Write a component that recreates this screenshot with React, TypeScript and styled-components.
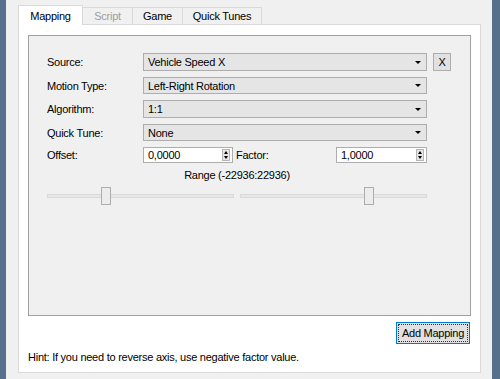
import React from 'react';
import styled, { createGlobalStyle } from 'styled-components';

const GlobalStyle = createGlobalStyle`
  html, body { margin: 0; padding: 0; background: #f0f0f0; }
  body {
    font-family: "Liberation Sans", Arial, sans-serif;
    font-size: 11px;
    letter-spacing: -0.25px;
    color: #000;
  }
  * { box-sizing: border-box; }
`;

const Window = styled.div`
  width: 500px;
  height: 379px;
  display: flex;
  background: #f0f0f0;
  overflow: hidden;
`;

const Edge = styled.div<{ $w: number }>`
  flex: none;
  width: ${p => p.$w}px;
  background: #56708c;
`;

const Main = styled.div`
  flex: 1;
  min-width: 0;
  display: flex;
  flex-direction: column;
  padding: 5px 11px 6px 12px;
`;

const TabBar = styled.div`
  height: 19px;
  display: flex;
  align-items: flex-end;
  position: relative;
  z-index: 1;
`;

const Tab = styled.div<{ $w: number; $active?: boolean; $disabled?: boolean }>`
  width: ${p => p.$w}px;
  height: ${p => (p.$active ? 20 : 17)}px;
  margin-bottom: ${p => (p.$active ? -1 : 0)}px;
  margin-left: -1px;
  &:first-child { margin-left: 0; }
  display: flex;
  align-items: center;
  justify-content: center;
  padding-top: ${p => (p.$active ? 1 : 0)}px;
  background: ${p => (p.$active ? '#fff' : '#f0f0f0')};
  border: 1px solid #d9d9d9;
  border-bottom: none;
  color: ${p => (p.$disabled ? '#9d9d9d' : '#000')};
  position: relative;
  z-index: ${p => (p.$active ? 2 : 1)};
`;

const Pane = styled.div`
  flex: 1;
  display: flex;
  flex-direction: column;
  background: #fff;
  border: 1px solid #d9d9d9;
  padding: 10px 9px 8px 9px;
`;

const Group = styled.div`
  flex: 1;
  background: #f0f0f0;
  border: 1px solid #a0a0a0;
  padding: 17px 18px 0 18px;
`;

const Form = styled.div`
  display: grid;
  grid-template-columns: 90px 284px 18px;
  grid-template-rows: 18px 17px 18px 17px 16px;
  column-gap: 6px;
  row-gap: 6px;
  align-items: stretch;
`;

const Label = styled.div`
  display: flex;
  align-items: center;
`;

const Combo = styled.div`
  grid-column: 2;
  display: flex;
  align-items: center;
  justify-content: space-between;
  padding: 0 5px 0 4px;
  background: #e5e5e5;
  border: 1px solid #adadad;
`;

const Arrow = styled.span`
  width: 0;
  height: 0;
  border-left: 3px solid transparent;
  border-right: 3px solid transparent;
  border-top: 3px solid #000;
`;

const SmallButton = styled.div`
  grid-column: 3;
  display: flex;
  align-items: center;
  justify-content: center;
  background: #e1e1e1;
  border: 1px solid #adadad;
  font-size: 11px;
`;

const OffsetRow = styled.div`
  grid-column: 2;
  display: grid;
  grid-template-columns: 90px 1fr 91px;
  column-gap: 3px;
`;

const Spin = styled.div`
  display: flex;
  align-items: center;
  justify-content: space-between;
  padding: 0 2px 0 4px;
  background: #fff;
  border: 1px solid #adadad;
`;

const SpinArrows = styled.div`
  width: 8px;
  height: 12px;
  display: flex;
  flex-direction: column;
  align-items: center;
  justify-content: space-evenly;
  background: #e6e6e6;
  border: 1px solid #b5b5b5;
`;

const Tri = styled.span<{ $up?: boolean }>`
  width: 0;
  height: 0;
  border-left: 2.5px solid transparent;
  border-right: 2.5px solid transparent;
  ${p => (p.$up ? 'border-bottom: 3px solid #000;' : 'border-top: 3px solid #000;')}
`;

const RangeText = styled.div`
  width: 380px;
  margin-top: 5px;
  line-height: 14px;
  text-align: center;
`;

const Sliders = styled.div`
  width: 380px;
  margin-top: 5px;
  display: grid;
  grid-template-columns: 1fr 1fr;
  column-gap: 6px;
`;

const SliderTrack = styled.div`
  position: relative;
  height: 18px;
  display: flex;
  align-items: center;
`;

const Groove = styled.div`
  width: 100%;
  height: 4px;
  background: #e7e7e7;
  border: 1px solid #dadada;
`;

const Thumb = styled.div`
  position: absolute;
  top: 0;
  width: 10px;
  height: 18px;
  background: #ececec;
  border: 1px solid #adadad;
`;

const ButtonRow = styled.div`
  display: flex;
  justify-content: flex-end;
  margin-top: 6px;
  padding-right: 1px;
`;

const PushButton = styled.div`
  width: 74px;
  height: 22px;
  padding: 1px;
  background: #e1e1e1;
  border: 1px solid #0078d7;
`;

const FocusRect = styled.div`
  height: 100%;
  display: flex;
  align-items: center;
  justify-content: center;
  border: 1px dotted #333;
  white-space: nowrap;
`;

const Hint = styled.div`
  margin-top: 6px;
  line-height: 14px;
`;

function Slider({ value }: { value: number }) {
  return (
    <SliderTrack>
      <Groove />
      <Thumb style={{ left: `calc(${value * 100}% - ${value * 10}px)` }} />
    </SliderTrack>
  );
}

function ComboBox({ text }: { text: string }) {
  return (
    <Combo>
      <span>{text}</span>
      <Arrow />
    </Combo>
  );
}

function SpinBox({ value }: { value: string }) {
  return (
    <Spin>
      <span>{value}</span>
      <SpinArrows>
        <Tri $up />
        <Tri />
      </SpinArrows>
    </Spin>
  );
}

export default function App() {
  return (
    <Window>
      <GlobalStyle />
      <Edge $w={6} />
      <Main>
        <TabBar>
          <Tab $w={65} $active>Mapping</Tab>
          <Tab $w={51} $disabled>Script</Tab>
          <Tab $w={51}>Game</Tab>
          <Tab $w={80}>Quick Tunes</Tab>
        </TabBar>
        <Pane>
          <Group>
            <Form>
              <Label>Source:</Label>
              <ComboBox text="Vehicle Speed X" />
              <SmallButton>X</SmallButton>
              <Label>Motion Type:</Label>
              <ComboBox text="Left-Right Rotation" />
              <span />
              <Label>Algorithm:</Label>
              <ComboBox text="1:1" />
              <span />
              <Label>Quick Tune:</Label>
              <ComboBox text="None" />
              <span />
              <Label>Offset:</Label>
              <OffsetRow>
                <SpinBox value="0,0000" />
                <Label>Factor:</Label>
                <SpinBox value="1,0000" />
              </OffsetRow>
            </Form>
            <RangeText>Range (-22936:22936)</RangeText>
            <Sliders>
              <Slider value={0.305} />
              <Slider value={0.7} />
            </Sliders>
          </Group>
          <ButtonRow>
            <PushButton>
              <FocusRect>Add Mapping</FocusRect>
            </PushButton>
          </ButtonRow>
          <Hint>Hint: If you need to reverse axis, use negative factor value.</Hint>
        </Pane>
      </Main>
      <Edge $w={8} />
    </Window>
  );
}
